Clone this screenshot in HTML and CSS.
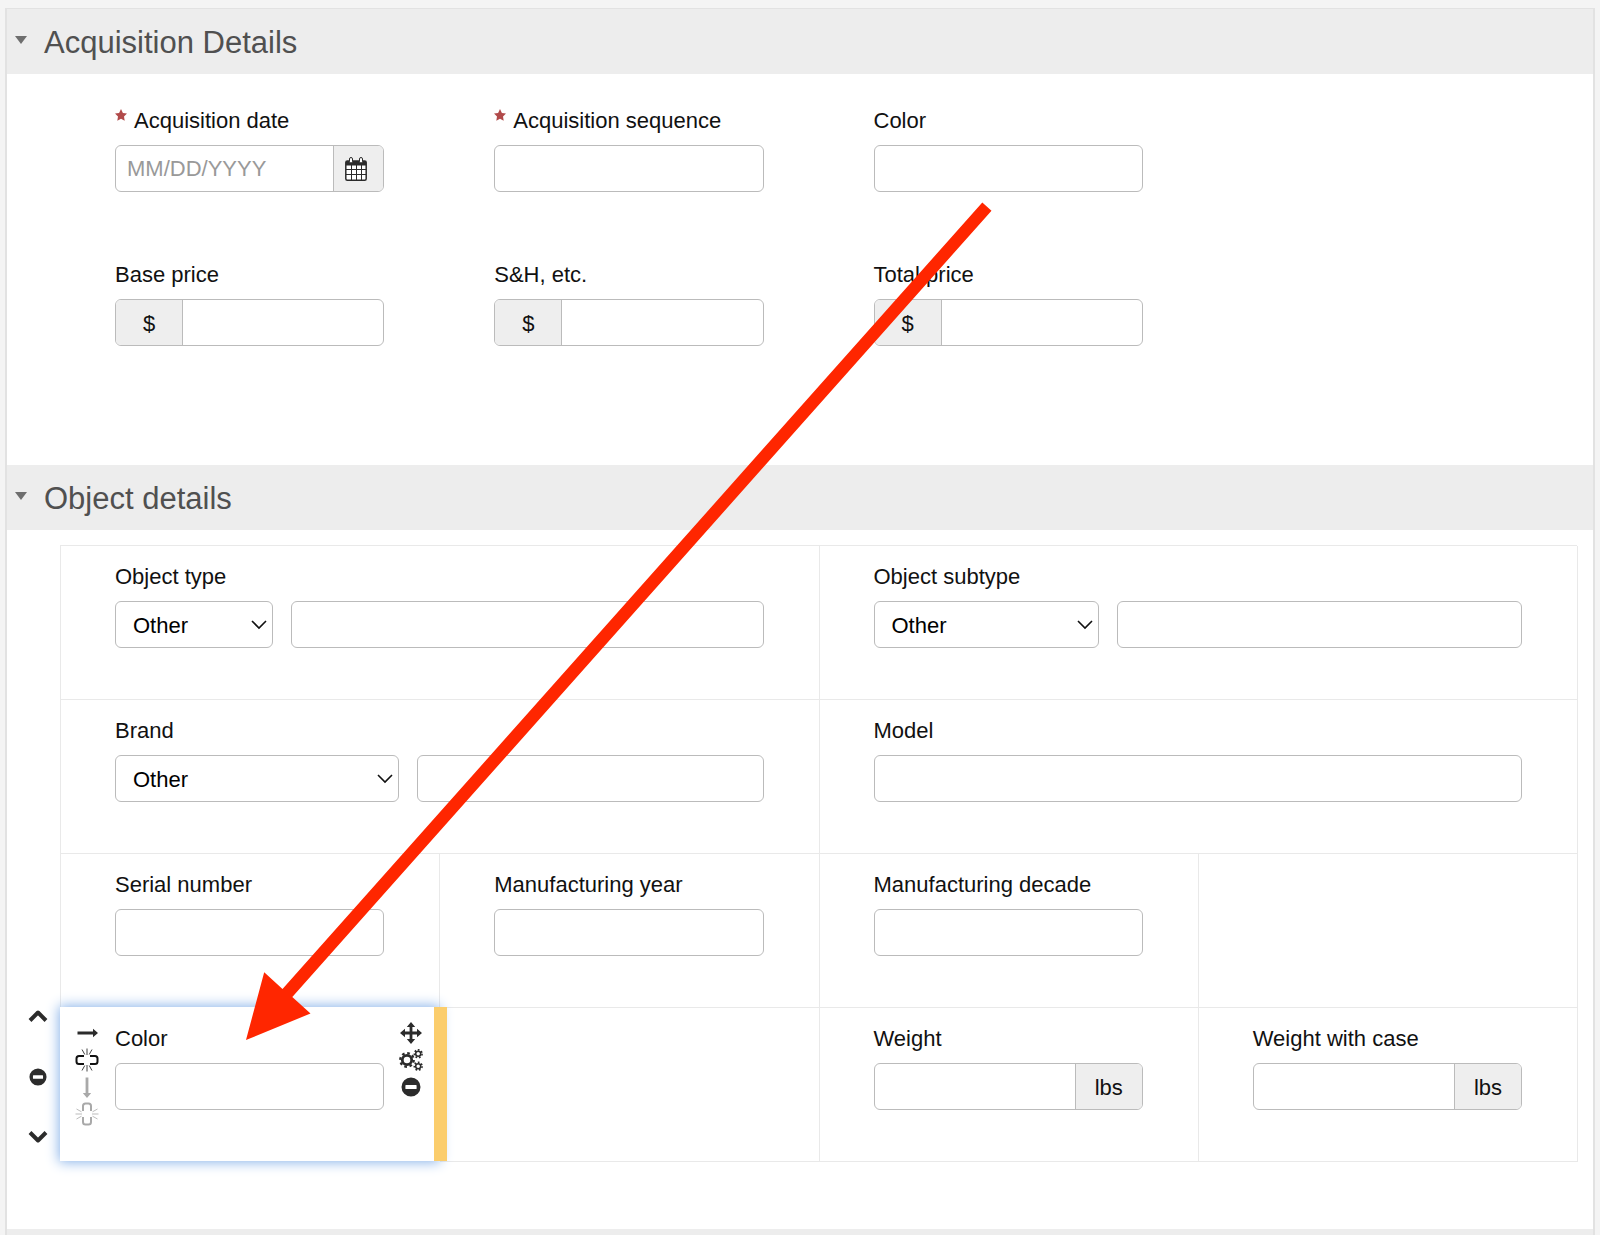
FILE: index.html
```html
<!DOCTYPE html>
<html lang="en">
<head>
<meta charset="utf-8">
<meta name="viewport" content="width=device-width, initial-scale=1">
<title>Acquisition form</title>
<link rel="stylesheet" href="styles.css">
</head>
<body>
<svg class="sprite" aria-hidden="true">
  <symbol id="star" viewBox="0 0 12 12"><path d="M6 0l1.900 3.900 4.100.5-3 3 .7 4.400L6 9.800 2.300 11.800l.7-4.400-3-3 4.100-.5z"/></symbol>
  <symbol id="caret" viewBox="0 0 12 8"><path d="M0 0h12L6 8z"/></symbol>
  <symbol id="calendar" viewBox="0 0 22 24">
    <rect x="1" y="4" width="20" height="19" rx="1.500" fill="#fff"/>
    <path fill="none" stroke="currentColor" stroke-width="1" d="M6.500 8v15M11.500 8v15M16.500 8v15M1 12.500h20M1 17.500h20"/>
    <rect x=".8" y="4" width="20.400" height="19.200" rx="1.500" fill="none" stroke="currentColor" stroke-width="1.500"/>
    <path d="M1 4h20v4.500H1z"/>
    <g fill="#fff" stroke="currentColor"><rect x="4.500" y=".5" width="3" height="5.500" rx="1.500"/><rect x="14.500" y=".5" width="3" height="5.500" rx="1.500"/></g>
  </symbol>
  <symbol id="up" viewBox="0 0 20 18"><path d="M2 13.500l8-8 8 8" fill="none" stroke="currentColor" stroke-width="4" stroke-linejoin="round"/></symbol>
  <symbol id="down" viewBox="0 0 20 18"><path d="M2 4.500l8 8 8-8" fill="none" stroke="currentColor" stroke-width="4" stroke-linejoin="round"/></symbol>
  <symbol id="minus" viewBox="0 0 20 20"><path fill-rule="evenodd" d="M10 .5a9.500 9.500 0 1 1 0 19 9.500 9.500 0 0 1 0-19zM5 8a.6.6 0 0 0-.6.6v2.800a.6.6 0 0 0 .6.6h10a.6.6 0 0 0 .6-.6V8.600a.6.6 0 0 0-.6-.6z"/></symbol>
  <symbol id="long-arrow" viewBox="0 0 24 24"><path d="M2.500 10.600H18V7.800l5 4.200-5 4.200v-2.800H2.500z"/></symbol>
  <symbol id="unlink" viewBox="0 0 24 24"><g fill="none" stroke="currentColor">
    <path stroke-width="2" d="M9 8H4A2.500 2.500 0 0 0 1.500 10.500v3A2.500 2.500 0 0 0 4 16h5M15 8h5a2.500 2.500 0 0 1 2.500 2.500v3A2.500 2.500 0 0 1 20 16h-5"/>
    <path stroke-width=".8" d="M12 .5V7M7 1.500l2.800 5M17 1.500l-2.800 5M12 17v6.500M9.800 17.500l-2.800 5M14.200 17.500l2.800 5"/></g></symbol>
  <symbol id="move" viewBox="0 0 24 24"><path d="M12 1l4.200 5h-2.800v4.600H18V7.800l5 4.200-5 4.200v-2.800h-4.600V18h2.800L12 23l-4.200-5h2.800v-4.600H6v2.800L1 12l5-4.200v2.800h4.600V6H7.800z"/></symbol>
  <symbol id="gears" viewBox="0 0 24 24"><g fill="none" stroke="currentColor">
    <circle cx="8" cy="12" r="4.700" stroke-width="2.800"/><circle cx="8" cy="12" r="6.800" stroke-width="2.200" stroke-dasharray="2.670 2.670"/>
    <circle cx="19.200" cy="5.800" r="2.500" stroke-width="1.500"/><circle cx="19.200" cy="5.800" r="3.900" stroke-width="1.600" stroke-dasharray="1.750 1.750"/>
    <circle cx="19.200" cy="18.200" r="2.500" stroke-width="1.500"/><circle cx="19.200" cy="18.200" r="3.900" stroke-width="1.600" stroke-dasharray="1.750 1.750"/></g></symbol>
</svg>

<main class="panel">
  <section>
    <header class="section-head">
      <button class="toggle" type="button" aria-label="Collapse section"><svg class="caret"><use href="#caret"/></svg></button>
      <h2>Acquisition Details</h2>
    </header>
    <div class="section-body">
      <div class="row">
        <div class="cell">
          <div class="field">
            <label for="acq-date"><svg class="star"><use href="#star"/></svg>Acquisition date</label>
            <div class="group">
              <input id="acq-date" type="text" placeholder="MM/DD/YYYY">
              <button class="addon date" type="button" aria-label="Pick a date"><svg class="calendar"><use href="#calendar"/></svg></button>
            </div>
          </div>
        </div>
        <div class="cell"><div class="field">
          <label for="acq-seq"><svg class="star"><use href="#star"/></svg>Acquisition sequence</label>
          <div class="group"><input id="acq-seq" type="text"></div>
        </div></div>
        <div class="cell"><div class="field">
          <label for="acq-color">Color</label>
          <div class="group"><input id="acq-color" type="text"></div>
        </div></div>
      </div>
      <div class="row">
        <div class="cell"><div class="field">
          <label for="base">Base price</label>
          <div class="group"><span class="addon">$</span><input id="base" type="text"></div>
        </div></div>
        <div class="cell"><div class="field">
          <label for="sh">S&amp;H, etc.</label>
          <div class="group"><span class="addon">$</span><input id="sh" type="text"></div>
        </div></div>
        <div class="cell"><div class="field">
          <label for="total">Total price</label>
          <div class="group"><span class="addon">$</span><input id="total" type="text"></div>
        </div></div>
      </div>
    </div>
  </section>

  <section>
    <header class="section-head">
      <button class="toggle" type="button" aria-label="Collapse section"><svg class="caret"><use href="#caret"/></svg></button>
      <h2>Object details</h2>
    </header>
    <div class="section-body lined">
      <div class="row">
        <div class="cell wide"><div class="field">
          <label for="type">Object type</label>
          <div class="pair quarter">
            <select id="type"><option>Other</option></select>
            <div class="group"><input type="text" aria-label="Other object type"></div>
          </div>
        </div></div>
        <div class="cell wide"><div class="field">
          <label for="subtype">Object subtype</label>
          <div class="pair third">
            <select id="subtype"><option>Other</option></select>
            <div class="group"><input type="text" aria-label="Other object subtype"></div>
          </div>
        </div></div>
      </div>
      <div class="row">
        <div class="cell wide"><div class="field">
          <label for="brand">Brand</label>
          <div class="pair half">
            <select id="brand"><option>Other</option></select>
            <div class="group"><input type="text" aria-label="Other brand"></div>
          </div>
        </div></div>
        <div class="cell wide"><div class="field">
          <label for="model">Model</label>
          <div class="group"><input id="model" type="text"></div>
        </div></div>
      </div>
      <div class="row">
        <div class="cell"><div class="field">
          <label for="serial">Serial number</label>
          <div class="group"><input id="serial" type="text"></div>
        </div></div>
        <div class="cell"><div class="field">
          <label for="year">Manufacturing year</label>
          <div class="group"><input id="year" type="text"></div>
        </div></div>
        <div class="cell"><div class="field">
          <label for="decade">Manufacturing decade</label>
          <div class="group"><input id="decade" type="text"></div>
        </div></div>
        <div class="cell"></div>
      </div>
      <div class="row">
        <div class="row-tools">
          <button type="button" aria-label="Move row up"><svg><use href="#up"/></svg></button>
          <button type="button" aria-label="Remove row"><svg><use href="#minus"/></svg></button>
          <button type="button" aria-label="Move row down"><svg><use href="#down"/></svg></button>
        </div>
        <div class="cell selected">
          <div class="cell-tools">
            <button type="button" aria-label="Widen"><svg><use href="#long-arrow"/></svg></button>
            <button class="dark" type="button" aria-label="Split horizontally"><svg><use href="#unlink"/></svg></button>
            <button class="off turned" type="button" aria-label="Heighten" disabled><svg><use href="#long-arrow"/></svg></button>
            <button class="off turned" type="button" aria-label="Split vertically" disabled><svg><use href="#unlink"/></svg></button>
          </div>
          <div class="field">
            <label for="obj-color">Color</label>
            <div class="group"><input id="obj-color" type="text"></div>
          </div>
          <div class="cell-tools">
            <button type="button" aria-label="Move field"><svg><use href="#move"/></svg></button>
            <button type="button" aria-label="Field settings"><svg><use href="#gears"/></svg></button>
            <button class="small" type="button" aria-label="Remove field"><svg><use href="#minus"/></svg></button>
          </div>
        </div>
        <div class="cell"></div>
        <div class="cell"><div class="field">
          <label for="weight">Weight</label>
          <div class="group"><input id="weight" type="text"><span class="addon">lbs</span></div>
        </div></div>
        <div class="cell"><div class="field">
          <label for="weight-case">Weight with case</label>
          <div class="group"><input id="weight-case" type="text"><span class="addon">lbs</span></div>
        </div></div>
      </div>
    </div>
  </section>
  <div class="next-head"></div>
</main>

<svg class="callout" width="1000" height="1050" viewBox="0 0 1000 1050" aria-hidden="true">
  <path d="M982.300 202.500l9.200 8.200L292.300 997l18.200 16.500L246 1040l18.200-67.800 18.300 16.800z"/>
</svg>
</body>
</html>
```
FILE: styles.css
```css
* { box-sizing: border-box; }

body {
  margin: 0;
  position: relative;
  padding: 8px 5px 0;
  background: #f4f4f4;
  color: #111;
  font: 22px/28px "Liberation Sans", Arial, sans-serif;
}

svg { display: block; fill: currentColor; }
.sprite { position: absolute; width: 0; height: 0; }

button {
  padding: 0;
  border: 0;
  background: none;
  color: #2b2b2b;
  font: inherit;
}

.panel {
  display: flex;
  flex-direction: column;
  min-height: calc(100vh - 8px);
  border: 2px solid #e2e2e2;
  border-top-width: 1px;
  border-bottom: 0;
  background: #fff;
}

.section-head {
  display: flex;
  align-items: center;
  gap: 17px;
  height: 65px;
  padding-left: 8px;
  background: #ededed;
}
.section-head h2 {
  margin: 0;
  padding-top: 2px;
  color: #505050;
  font-size: 31px;
  font-weight: 400;
  line-height: 40px;
}
.toggle { padding-bottom: 4px; color: #6e6e6e; }
.caret { width: 12px; height: 8px; }

.section-body { padding: 15px 16px 68px 0; }

.row {
  display: grid;
  grid-template-columns: 53px repeat(4, minmax(0, 1fr));
  min-height: 154px;
}
.row::before { content: ""; grid-area: 1 / 1; }

.cell {
  display: grid;
  grid-template-columns: 55px minmax(0, 1fr) 55px;
  align-items: start;
}
.cell.wide { grid-column-end: span 2; }
.lined .cell { box-shadow: inset 1px 1px #e9e9e9, 1px 1px #e9e9e9; }

.field {
  grid-column: 2;
  display: flex;
  flex-direction: column;
  gap: 10px;
  padding-top: 18px;
}
.field label { display: flex; gap: 7px; }
.star { width: 12px; height: 12px; margin-top: 2px; color: #b14a4a; }

.group {
  display: flex;
  height: 47px;
  border: 1px solid #bbb;
  border-radius: 6px;
  background: #fff;
  overflow: hidden;
}
.group input {
  flex: 1;
  min-width: 0;
  padding: 0 11px;
  border: 0;
  background: none;
  font: inherit;
  outline: 0;
}
.group input::placeholder { color: #999; }

.addon {
  display: flex;
  align-items: center;
  justify-content: center;
  width: 67px;
  padding-top: 2px;
  border: 0 solid #bbb;
  background: #eee;
}
.addon:first-child { border-right-width: 1px; }
.addon:last-child { border-left-width: 1px; }
.addon.date { width: 50px; padding: 0 5px 0 0; }
.calendar { width: 22px; height: 24px; }

.pair { display: grid; gap: 18px; }
.pair.quarter { grid-template-columns: 1fr 3fr; }
.pair.third { grid-template-columns: 5fr 9fr; }
.pair.half { grid-template-columns: 9fr 11fr; }
.pair select {
  appearance: none;
  min-width: 0;
  height: 47px;
  padding: 2px 30px 0 17px;
  border: 1px solid #bbb;
  border-radius: 6px;
  background: #fff url("data:image/svg+xml,%3Csvg xmlns='http://www.w3.org/2000/svg' width='16' height='10'%3E%3Cpath d='M1 1l7 7 7-7' fill='none' stroke='%23111' stroke-width='1.600'/%3E%3C/svg%3E") no-repeat right 5px center;
  color: #000;
  font: inherit;
}

.row-tools {
  grid-area: 1 / 1;
  display: flex;
  flex-direction: column;
  align-items: center;
  justify-content: space-between;
  padding: 0 0 15px 9px;
}
.row-tools svg { width: 20px; height: 18px; }

.lined .cell.selected {
  position: relative;
  z-index: 1;
  background: #fff;
  box-shadow: 0 0 12px 1px #85b0e8;
}
.selected::after {
  content: "";
  position: absolute;
  inset: 0 -8px 0 auto;
  width: 13px;
  background: #fbcd6c;
}

.cell-tools {
  display: flex;
  flex-direction: column;
  align-items: center;
  padding: 12px 2px 0 0;
}
.cell-tools button {
  display: grid;
  place-items: center;
  width: 27px;
  height: 27px;
}
.cell-tools svg { width: 24px; height: 24px; }
.cell-tools .small svg { width: 20px; height: 20px; }
.cell-tools .dark { color: #111; }
.cell-tools .off { color: #a9a9a9; }
.cell-tools .turned svg { rotate: 90deg; }

.next-head { flex: 1 0 6px; background: #ededed; }

.callout {
  position: absolute;
  z-index: 2;
  top: 0;
  left: 0;
  color: #ff2600;
  pointer-events: none;
}
```
